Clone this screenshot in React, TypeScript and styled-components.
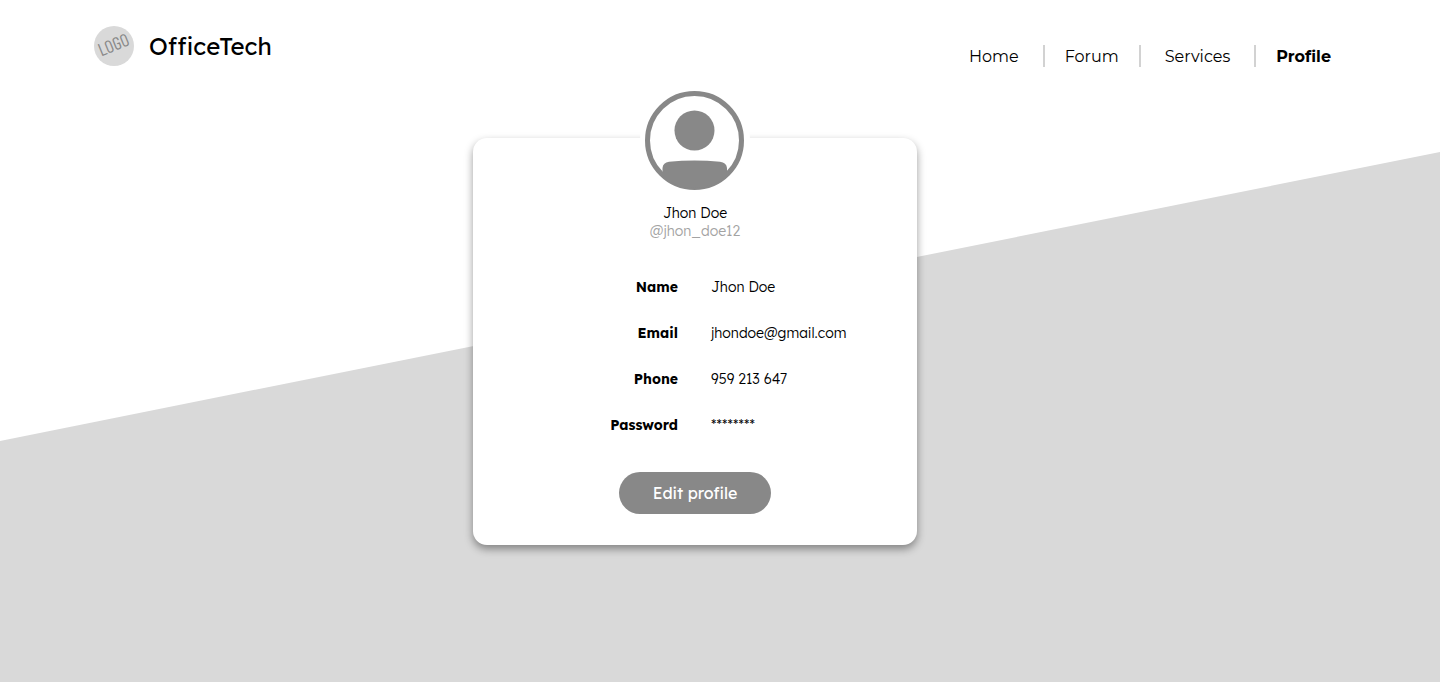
import React from 'react';
import styled, { createGlobalStyle } from 'styled-components';

const GlobalStyle = createGlobalStyle`
  *, *::before, *::after { box-sizing: border-box; }
  body {
    margin: 0;
    background: #fff;
    color: #000;
    font-family: Lexend, Inter, sans-serif;
  }
`;

const Page = styled.div`
  position: relative;
  isolation: isolate;
  min-height: 100vh;
  display: flex;
  flex-direction: column;

  &::before {
    content: '';
    position: absolute;
    inset: 0;
    z-index: -1;
    background: #d9d9d9;
    clip-path: polygon(0 441px, 100% 152px, 100% 100%, 0 100%);
  }
`;

const Header = styled.header`
  display: flex;
  flex-wrap: wrap;
  justify-content: space-between;
  padding: 26px 109px 0 94px;
`;

const Brand = styled.a`
  display: flex;
  align-items: center;
  gap: 15px;
  height: 40px;
  color: inherit;
  text-decoration: none;
  font-size: 24px;
  font-weight: 400;
`;

const LogoMark = styled.svg`
  width: 40px;
  height: 40px;
  font-family: 'Barlow Condensed', 'Roboto Condensed', 'Liberation Sans Narrow', sans-serif;
  font-weight: 400;
`;

const NavList = styled.ul`
  display: flex;
  align-items: center;
  margin: 19px 0 0;
  padding: 0;
  list-style: none;
`;

const NavItem = styled.li`
  padding: 0 24px;

  &:nth-child(even) {
    padding: 0 20px;
  }
  & + & {
    border-left: 2px solid #d2d2d2;
  }
  &:first-child {
    padding-left: 0;
  }
  &:last-child {
    padding-right: 0;
  }
`;

const NavLink = styled.a<{ $active?: boolean }>`
  display: block;
  padding-top: 2px;
  color: inherit;
  text-decoration: none;
  font-family: Montserrat, Inter, sans-serif;
  font-size: 16px;
  line-height: 20px;
  font-weight: ${(p) => (p.$active ? 700 : 400)};
`;

const Main = styled.main`
  display: flex;
  justify-content: center;
  padding: 71px 50px 40px 0;
`;

const Card = styled.section`
  display: flex;
  flex-direction: column;
  align-items: center;
  width: 444px;
  padding-bottom: 31px;
  border-radius: 14px;
  background: #fff;
  box-shadow: 0 4px 8px rgba(0, 0, 0, 0.4);
`;

const AvatarFrame = styled.div`
  margin-top: -52px;
  padding: 5px;
  border-radius: 50%;
  background: #fff;
`;

const Avatar = styled.svg`
  display: block;
  width: 100px;
  height: 100px;
`;

const DisplayName = styled.h1`
  margin: 8px 0 0;
  font-size: 14px;
  line-height: 18px;
  font-weight: 300;
`;

const Handle = styled.p`
  margin: 0;
  color: #a3a3a3;
  font-size: 14px;
  line-height: 18px;
  font-weight: 300;
`;

const Details = styled.dl`
  align-self: stretch;
  display: grid;
  grid-template-columns: 205px 1fr;
  gap: 26px 33px;
  margin: 37px 0 0;
  font-size: 14px;
  line-height: 20px;
`;

const Label = styled.dt`
  text-align: right;
  font-weight: 700;
`;

const Value = styled.dd`
  margin: 0;
  font-weight: 300;
`;

const EditButton = styled.button`
  margin-top: 37px;
  width: 152px;
  height: 42px;
  border: 0;
  border-radius: 21px;
  background: #888;
  color: #fff;
  font-family: inherit;
  font-size: 16px;
  cursor: pointer;
`;

const links = ['Home', 'Forum', 'Services', 'Profile'];

const details = [
  ['Name', 'Jhon Doe'],
  ['Email', 'jhondoe@gmail.com'],
  ['Phone', '959 213 647'],
  ['Password', '********'],
];

export default function App() {
  return (
    <>
      <GlobalStyle />
      <Page>
        <Header>
          <Brand href="#home">
            <LogoMark viewBox="0 0 40 40" aria-hidden="true">
              <circle cx="20" cy="20" r="20" fill="#d9d9d9" />
              <text
                x="20"
                y="25"
                fontSize="18"
                fill="#888"
                textAnchor="middle"
                transform="rotate(-22 20 20)"
              >
                LOGO
              </text>
            </LogoMark>
            OfficeTech
          </Brand>
          <nav aria-label="Main">
            <NavList>
              {links.map((name) => (
                <NavItem key={name}>
                  <NavLink
                    href={`#${name.toLowerCase()}`}
                    $active={name === 'Profile'}
                    aria-current={name === 'Profile' ? 'page' : undefined}
                  >
                    {name}
                  </NavLink>
                </NavItem>
              ))}
            </NavList>
          </nav>
        </Header>
        <Main>
          <Card>
            <AvatarFrame>
              <Avatar viewBox="0 0 100 100" role="img" aria-label="Profile picture">
                <circle cx="49.5" cy="49.5" r="47" fill="#fff" stroke="#888" strokeWidth="5" />
                <circle cx="49.5" cy="39.5" r="20" fill="#888" />
                <path
                  d="M17.5 84V77Q18 71.5 24 70.8Q49.5 68 75 70.8Q81.5 71.5 82 77V84Q68 97 49.5 97Q31 97 17.5 84Z"
                  fill="#888"
                />
              </Avatar>
            </AvatarFrame>
            <DisplayName>Jhon Doe</DisplayName>
            <Handle>@jhon_doe12</Handle>
            <Details>
              {details.map(([label, value]) => (
                <React.Fragment key={label}>
                  <Label>{label}</Label>
                  <Value>{value}</Value>
                </React.Fragment>
              ))}
            </Details>
            <EditButton type="button">Edit profile</EditButton>
          </Card>
        </Main>
      </Page>
    </>
  );
}
